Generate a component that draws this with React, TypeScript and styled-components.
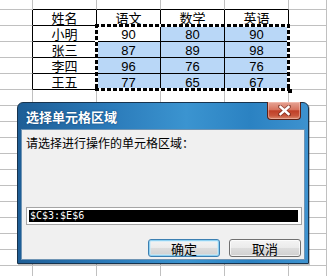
import React from "react";
import styled, { createGlobalStyle } from "styled-components";

const GlobalStyle = createGlobalStyle`
  html, body {
    margin: 0;
    padding: 0;
    width: 327px;
    height: 276px;
    overflow: hidden;
    background: #ffffff;
    font-family: "Liberation Sans", "Noto Sans CJK SC", sans-serif;
  }
`;

const GRID = "#c0c0c0";
const INK = "#000000";
const SEL = "#b9d7f7";

const Sheet = styled.div`
  position: relative;
  display: grid;
  grid-template-columns: 33px 64px 64px 64px 64px 38px;
  grid-template-rows: 10px repeat(17, 16px);
  width: 327px;
  height: 276px;
  overflow: hidden;
`;

const Cell = styled.div<{
  $row: number;
  $col: number;
  $right: string;
  $bottom: string;
  $fill: string;
}>`
  grid-row: ${(p) => p.$row};
  grid-column: ${(p) => p.$col};
  box-sizing: border-box;
  border-right: 1px solid ${(p) => p.$right};
  border-bottom: 1px solid ${(p) => p.$bottom};
  background: ${(p) => p.$fill};
  display: flex;
  align-items: center;
  justify-content: center;
  font-family: "Liberation Sans", "Noto Sans CJK SC", sans-serif;
  font-size: 13px;
  line-height: 1;
  color: #000;
  padding-top: 1px;
`;

const Marquee = styled.div`
  grid-column: 3 / 6;
  grid-row: 3 / 7;
  position: relative;
  z-index: 1;
  margin: -2px -1px -1px -2px;
  pointer-events: none;
  background:
    repeating-linear-gradient(90deg, #000 0 4px, #fff 4px 6px) top / 100% 3px no-repeat,
    repeating-linear-gradient(90deg, #000 0 4px, #fff 4px 6px) bottom / 100% 3px no-repeat,
    repeating-linear-gradient(180deg, #000 0 4px, #fff 4px 6px) left / 3px 100% no-repeat,
    repeating-linear-gradient(180deg, #000 0 4px, #fff 4px 6px) right / 3px 100% no-repeat;
`;

const Handle = styled.div`
  position: absolute;
  right: -2px;
  bottom: -2px;
  width: 4px;
  height: 4px;
  background: #000;
`;

const Window = styled.div`
  position: absolute;
  z-index: 2;
  left: 17px;
  top: 102px;
  width: 292px;
  height: 162px;
  box-sizing: border-box;
  border: 1px solid #17334d;
  border-radius: 6px 6px 0 0;
  padding: 0 3px 3px;
  display: flex;
  flex-direction: column;
  background: linear-gradient(
    90deg,
    #1e5e96 0%,
    #2a79b8 30%,
    #3b94d0 58%,
    #2b82c2 80%,
    #3d92cf 100%
  );
  box-shadow: 1px 1px 0 rgba(0, 0, 0, 0.25);
`;

const TitleBar = styled.div`
  height: 26px;
  display: flex;
  align-items: flex-start;
  justify-content: space-between;
`;

const Title = styled.div`
  padding: 7px 0 0 5px;
  color: #ffffff;
  font-family: "Noto Sans CJK SC", sans-serif;
  font-weight: bold;
  font-size: 13px;
  line-height: 14px;
  text-shadow: 0 0 2px rgba(0, 30, 70, 0.6);
`;

const CloseButton = styled.div`
  margin: -1px 4px 0 0;
  width: 34px;
  height: 18px;
  box-sizing: border-box;
  border: 1px solid #5b2117;
  border-top: none;
  border-radius: 0 0 4px 4px;
  display: flex;
  align-items: center;
  justify-content: center;
  background: linear-gradient(
    180deg,
    #e6a596 0%,
    #d7735e 45%,
    #bf3f27 52%,
    #c8553b 80%,
    #d98a6e 100%
  );
  box-shadow: inset 0 0 0 1px rgba(255, 210, 200, 0.45);
`;

const Body = styled.div`
  flex: 1;
  box-sizing: border-box;
  background: #f0f0f0;
  border: 1px solid #6f94b4;
  padding: 6px 2px 0 4px;
  display: flex;
  flex-direction: column;
`;

const Prompt = styled.div`
  font-family: "Noto Sans CJK SC", sans-serif;
  font-size: 12px;
  line-height: 14px;
  color: #000;
`;

const RangeField = styled.div`
  margin-top: 57px;
  height: 18px;
  width: 276px;
  box-sizing: border-box;
  border: 1px solid #a5a5a5;
  background: #ffffff;
  padding: 2px 3px 2px 2px;
  display: flex;
`;

const RangeText = styled.div`
  flex: 1;
  background: #000000;
  color: #ffffff;
  font-family: "DejaVu Sans Mono", "Liberation Mono", monospace;
  font-size: 10px;
  line-height: 12px;
  padding-left: 1px;
  white-space: pre;
`;

const ButtonRow = styled.div`
  margin-top: 14px;
  width: 275px;
  display: flex;
  justify-content: flex-end;
  gap: 9px;
`;

const Button = styled.div<{ $default?: boolean }>`
  width: 72px;
  height: 18px;
  box-sizing: border-box;
  border: 1px solid ${(p) => (p.$default ? "#3c7fb1" : "#707070")};
  border-radius: 3px;
  display: flex;
  align-items: center;
  justify-content: center;
  font-family: "Noto Sans CJK SC", sans-serif;
  font-size: 13px;
  line-height: 1;
  color: #000;
  background: linear-gradient(
    180deg,
    #f4f4f4 0%,
    #ebebeb 48%,
    #dddddd 52%,
    #cfcfcf 100%
  );
  box-shadow: ${(p) =>
    p.$default
      ? "inset 0 0 0 1px #8fd1f2, inset 0 0 0 2px rgba(200,235,250,0.6)"
      : "inset 0 0 0 1px rgba(255,255,255,0.7)"};
`;

type Row = string[];
const table: Row[] = [
  ["姓名", "语文", "数学", "英语"],
  ["小明", "90", "80", "90"],
  ["张三", "87", "89", "98"],
  ["李四", "96", "76", "76"],
  ["王五", "77", "65", "67"],
];

const ROWS = 18;
const COLS = 6;

function cellText(r: number, c: number): string {
  if (r >= 1 && r <= 5 && c >= 1 && c <= 4) return table[r - 1][c - 1];
  return "";
}

function rightColor(r: number, c: number): string {
  if (r >= 1 && r <= 5 && c >= 0 && c <= 4) return INK;
  return GRID;
}

function bottomColor(r: number, c: number): string {
  if (c >= 1 && c <= 4 && r >= 0 && r <= 5) return INK;
  return GRID;
}

function fillColor(r: number, c: number): string {
  const inSel = r >= 2 && r <= 5 && c >= 2 && c <= 4;
  if (inSel && !(r === 2 && c === 2)) return SEL;
  return "transparent";
}

const CloseGlyph = () => (
  <svg width="13" height="11" viewBox="0 0 13 11">
    <path
      d="M2 1.5 L11 9.5 M11 1.5 L2 9.5"
      stroke="#5a1c12"
      strokeWidth="4"
      strokeLinecap="square"
      opacity="0.55"
    />
    <path
      d="M2.5 2 L10.5 9 M10.5 2 L2.5 9"
      stroke="#ffffff"
      strokeWidth="2.4"
      strokeLinecap="square"
    />
  </svg>
);

export default function App() {
  const cells: React.ReactNode[] = [];
  for (let r = 0; r < ROWS; r++) {
    for (let c = 0; c < COLS; c++) {
      cells.push(
        <Cell
          key={`${r}-${c}`}
          $row={r + 1}
          $col={c + 1}
          $right={rightColor(r, c)}
          $bottom={bottomColor(r, c)}
          $fill={fillColor(r, c)}
        >
          {cellText(r, c)}
        </Cell>
      );
    }
  }
  return (
    <>
      <GlobalStyle />
      <Sheet>
        {cells}
        <Marquee>
          <Handle />
        </Marquee>
        <Window>
          <TitleBar>
            <Title>选择单元格区域</Title>
            <CloseButton>
              <CloseGlyph />
            </CloseButton>
          </TitleBar>
          <Body>
            <Prompt>请选择进行操作的单元格区域：</Prompt>
            <RangeField>
              <RangeText>$C$3:$E$6</RangeText>
            </RangeField>
            <ButtonRow>
              <Button $default>确定</Button>
              <Button>取消</Button>
            </ButtonRow>
          </Body>
        </Window>
      </Sheet>
    </>
  );
}
